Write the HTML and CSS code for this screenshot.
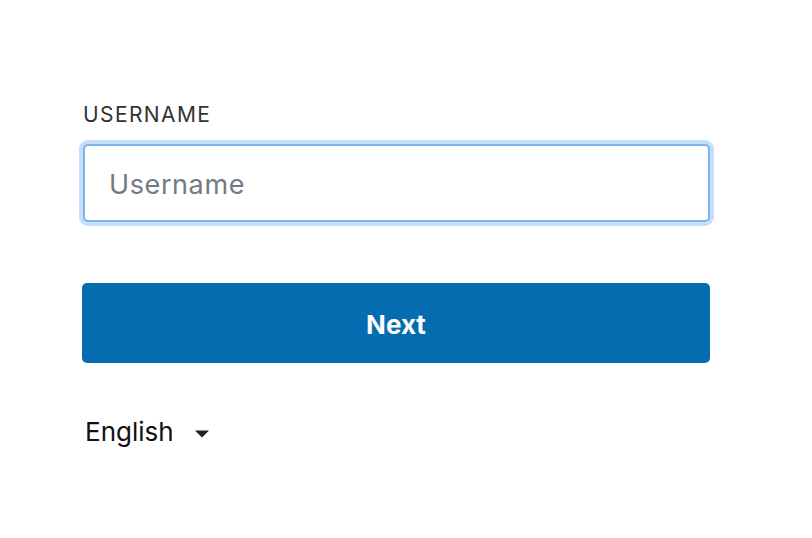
FILE: index.html
```html
<!DOCTYPE html>
<html lang="en">
<head>
<meta charset="utf-8">
<title>Sign in</title>
<link rel="stylesheet" href="styles.css">
</head>
<body>
<main class="form">
  <label class="label" for="username">USERNAME</label>
  <input class="input" id="username" type="text" placeholder="Username">
  <button class="btn" type="button">Next</button>
  <div class="lang">
    <span class="lang-text">English</span>
    <svg class="caret" width="16" height="9" viewBox="0 0 16 9"><path d="M1 1.5 L15 1.5 L8 8.5 Z" fill="#222"/></svg>
  </div>
</main>
</body>
</html>
```
FILE: styles.css
```css
html, body {
  margin: 0;
  padding: 0;
  background: #fff;
}
body {
  font-family: Inter, "Noto Sans", "Liberation Sans", sans-serif;
  color: #222;
}
.form {
  width: 628px;
  padding: 102px 0 0 82px;
  display: flex;
  flex-direction: column;
}
.label {
  font-size: 21px;
  line-height: 26px;
  color: #333;
  letter-spacing: 1.4px;
  margin-left: 1px;
}
.input {
  box-sizing: border-box;
  margin: 16px 0 0 1px;
  width: 627px;
  height: 78px;
  border: 2px solid #7fb2ea;
  border-radius: 5px;
  box-shadow: 0 0 0 4px #c5defc;
  padding: 3px 24px 0;
  font-family: inherit;
  font-size: 27px;
  letter-spacing: 0.6px;
  color: #222;
  outline: none;
}
.input::placeholder {
  color: #737a82;
}
.btn {
  margin-top: 61px;
  width: 628px;
  height: 80px;
  border: none;
  border-radius: 5px;
  background: #036db0;
  color: #fff;
  font-family: inherit;
  font-size: 26px;
  font-weight: 700;
  padding-top: 4px;
  cursor: pointer;
}
.lang {
  margin: 54px 0 0 3px;
  display: flex;
  align-items: center;
  gap: 20px;
}
.lang-text {
  font-size: 26px;
  line-height: 30px;
  color: #111;
}
.caret {
  display: block;
  margin-top: 2px;
}
```
